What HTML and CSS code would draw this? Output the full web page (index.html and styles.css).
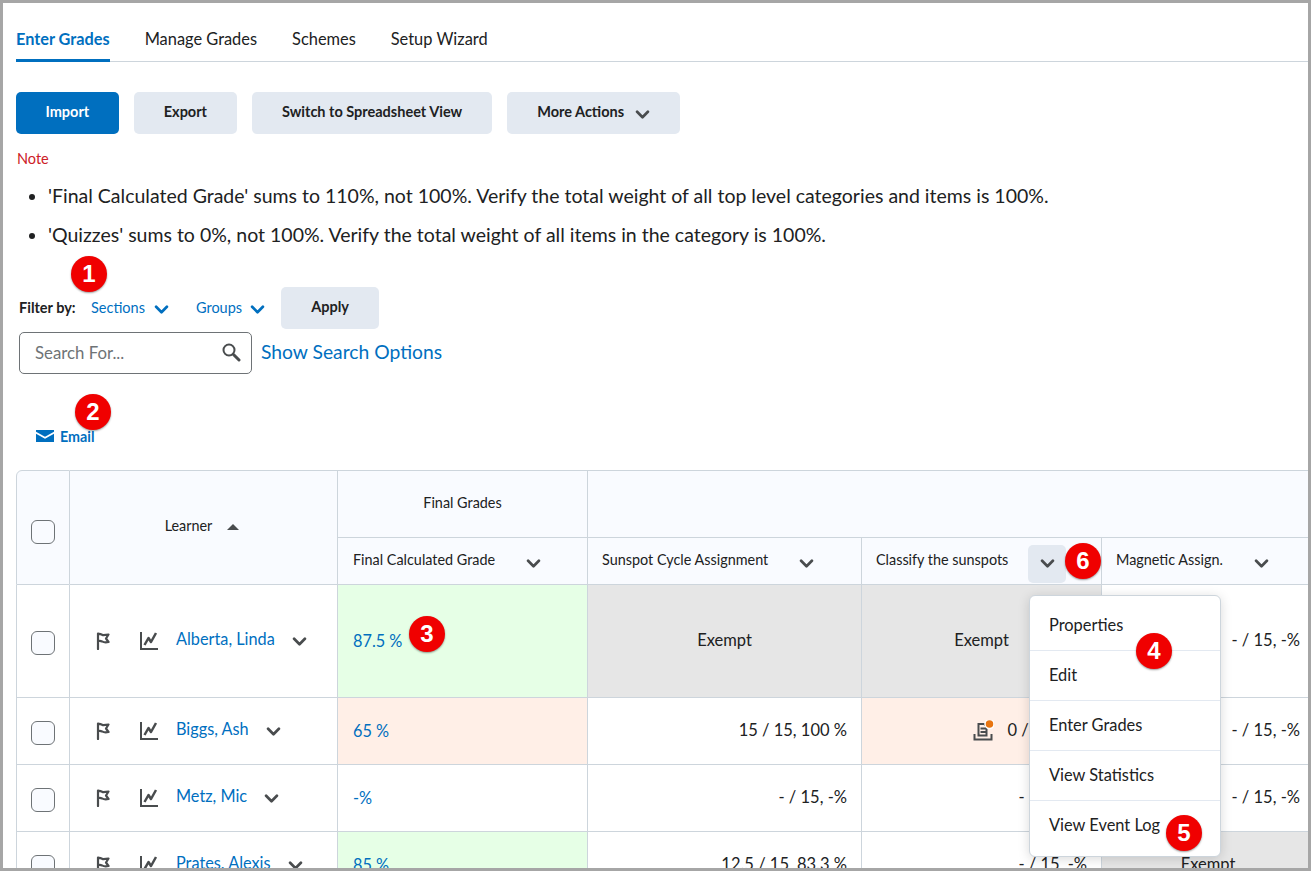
FILE: index.html
```html
<!DOCTYPE html>
<html lang="en">
<head>
<meta charset="utf-8">
<title>Enter Grades</title>
<link rel="stylesheet" href="styles.css">
</head>
<body>
<svg class="defs" aria-hidden="true">
  <symbol id="chev" viewBox="0 0 16 10"><path d="M2 2l6 6 6-6" fill="none" stroke="currentColor" stroke-width="3" stroke-linecap="round" stroke-linejoin="round"/></symbol>
  <symbol id="flag" viewBox="0 0 14 18"><path d="M2 1.500V17M2 2c3-.6 4 1 5.500 1.200L12.500 2.500 10 6.500l2.500 3.500c-3 .8-5 .3-6.500-.6-1.500-.7-2.800-.6-4-.2" fill="none" stroke="currentColor" stroke-width="2.200" stroke-linecap="round" stroke-linejoin="round"/></symbol>
  <symbol id="chart" viewBox="0 0 18 18"><path d="M1 0v17h17" fill="none" stroke="currentColor" stroke-width="2"/><path d="M4.500 13L8.500 6l2.500 4L16 1" fill="none" stroke="currentColor" stroke-width="2.500" stroke-linejoin="round"/></symbol>
</svg>
<div class="frame">
  <nav class="tabs">
    <a class="tab active">Enter Grades</a>
    <a class="tab">Manage Grades</a>
    <a class="tab">Schemes</a>
    <a class="tab">Setup Wizard</a>
  </nav>
  <div class="actions">
    <button class="btn primary">Import</button>
    <button class="btn">Export</button>
    <button class="btn">Switch to Spreadsheet View</button>
    <button class="btn more">More Actions <svg class="ic-chev"><use href="#chev"/></svg></button>
  </div>
  <div class="note-title">Note</div>
  <ul class="notes">
    <li>'Final Calculated Grade' sums to 110%, not 100%. Verify the total weight of all top level categories and items is 100%.</li>
    <li>'Quizzes' sums to 0%, not 100%. Verify the total weight of all items in the category is 100%.</li>
  </ul>
  <div class="filters">
    <span class="filter-label">Filter by:</span>
    <a class="filter sections">Sections <svg class="ic-chev"><use href="#chev"/></svg></a>
    <a class="filter groups">Groups <svg class="ic-chev"><use href="#chev"/></svg></a>
    <button class="btn apply">Apply</button>
  </div>
  <div class="search-row">
    <div class="search">
      <span>Search For...</span>
      <svg class="ic-search" viewBox="0 0 20 20"><circle cx="8" cy="8" r="5.500" fill="none" stroke="#494c4e" stroke-width="2"/><path d="M12.500 12.500L18 18" stroke="#494c4e" stroke-width="3" stroke-linecap="round"/></svg>
    </div>
    <a class="search-link">Show Search Options</a>
  </div>
  <a class="email">
    <svg class="ic-mail" viewBox="0 0 18 12"><path d="M0 0h18v1.800L9 6.800 0 1.800z" fill="#006fbf"/><path d="M0 3.800l9 5 9-5V12H0z" fill="#006fbf"/></svg>
    Email
  </a>
  <div class="table-wrap">
    <table class="grades">
      <colgroup>
        <col class="c-check"><col class="c-learner"><col class="c-final"><col class="c-a"><col class="c-b"><col class="c-c">
      </colgroup>
      <thead>
        <tr class="h1">
          <th rowspan="2" class="check-cell head-check"><span class="check"></span></th>
          <th rowspan="2" class="learner-h"><span>Learner</span><i class="sort"></i></th>
          <th class="group">Final Grades</th>
          <th colspan="3"></th>
        </tr>
        <tr class="h2">
          <th><div class="hc">Final Calculated Grade<svg class="ic-chev dark"><use href="#chev"/></svg></div></th>
          <th><div class="hc">Sunspot Cycle Assignment<svg class="ic-chev dark"><use href="#chev"/></svg></div></th>
          <th><div class="hc boxed">Classify the sunspots<span class="chev-box"><svg class="ic-chev dark"><use href="#chev"/></svg></span></div></th>
          <th><div class="hc">Magnetic Assign.<svg class="ic-chev dark"><use href="#chev"/></svg></div></th>
        </tr>
      </thead>
      <tbody>
        <tr class="r1">
          <td class="check-cell"><span class="check"></span></td>
          <td><div class="learner"><svg class="ic-flag"><use href="#flag"/></svg><svg class="ic-chart"><use href="#chart"/></svg><a>Alberta, Linda</a><svg class="ic-chev dark"><use href="#chev"/></svg></div></td>
          <td class="pct good">87.5 %</td>
          <td class="mid grey">Exempt</td>
          <td class="mid grey">Exempt</td>
          <td class="val">- / 15, -%</td>
        </tr>
        <tr class="r2">
          <td class="check-cell"><span class="check"></span></td>
          <td><div class="learner"><svg class="ic-flag"><use href="#flag"/></svg><svg class="ic-chart"><use href="#chart"/></svg><a>Biggs, Ash</a><svg class="ic-chev dark"><use href="#chev"/></svg></div></td>
          <td class="pct bad">65 %</td>
          <td class="val">15 / 15, 100 %</td>
          <td class="val bad sub">
            <svg class="ic-sub" viewBox="0 0 21 21"><path d="M1.500 14v5.500h17V14" fill="none" stroke="#494c4e" stroke-width="2"/><path d="M5.500 15.500V4h5.500l2.500 2v9.500zM7.500 8.500h5M7.500 12h5" fill="none" stroke="#494c4e" stroke-width="2"/><circle cx="16.500" cy="4" r="4.500" fill="#e87511" stroke="#fff" stroke-width="1.500"/></svg>0 / 15, 0 %
          </td>
          <td class="val">- / 15, -%</td>
        </tr>
        <tr class="r2">
          <td class="check-cell"><span class="check"></span></td>
          <td><div class="learner"><svg class="ic-flag"><use href="#flag"/></svg><svg class="ic-chart"><use href="#chart"/></svg><a>Metz, Mic</a><svg class="ic-chev dark"><use href="#chev"/></svg></div></td>
          <td class="pct">-%</td>
          <td class="val">- / 15, -%</td>
          <td class="val">- / 15, -%</td>
          <td class="val">- / 15, -%</td>
        </tr>
        <tr class="r2">
          <td class="check-cell"><span class="check"></span></td>
          <td><div class="learner"><svg class="ic-flag"><use href="#flag"/></svg><svg class="ic-chart"><use href="#chart"/></svg><a>Prates, Alexis</a><svg class="ic-chev dark"><use href="#chev"/></svg></div></td>
          <td class="pct good">85 %</td>
          <td class="val">12.5 / 15, 83.3 %</td>
          <td class="val">- / 15, -%</td>
          <td class="mid grey">Exempt</td>
        </tr>
      </tbody>
    </table>
  </div>
  <ul class="menu">
    <li>Properties</li>
    <li>Edit</li>
    <li>Enter Grades</li>
    <li>View Statistics</li>
    <li>View Event Log</li>
  </ul>
  <span class="badge b1">1</span>
  <span class="badge b2">2</span>
  <span class="badge b3">3</span>
  <span class="badge b4">4</span>
  <span class="badge b5">5</span>
  <span class="badge b6">6</span>
</div>
</body>
</html>
```
FILE: styles.css
```css
* { box-sizing: border-box; }
html, body { margin: 0; height: 871px; overflow: hidden; background: #fff; }
body { font-family: Lato, "Liberation Sans", sans-serif; color: #202122; }
.defs { display: none; }

.frame {
  position: relative;
  width: 1311px;
  height: 871px;
  border: 3px solid #a6a6a6;
  padding: 0 0 0 13px;
  overflow: hidden;
}

.tabs {
  display: flex;
  gap: 35px;
  height: 59px;
  border-bottom: 1px solid #cdd5dc;
}
.tab {
  position: relative;
  height: 58px;
  padding-top: 26px;
  font-size: 16.400px;
  line-height: 20px;
  color: #202122;
}
.tab.active { color: #006fbf; font-weight: 700; font-size: 16.300px; }
.tab.active::after {
  content: "";
  position: absolute;
  left: 0; right: 0; bottom: -1px;
  height: 3px;
  background: #006fbf;
}

.actions { display: flex; gap: 15px; margin-top: 30px; }
.btn {
  height: 42px;
  padding: 0 30px 2px;
  border: 0;
  border-radius: 5px;
  background: #e3e9f1;
  color: #202122;
  font: 700 14.500px/20px Lato, "Liberation Sans", sans-serif;
}
.btn.primary { background: #006fbf; color: #fff; padding: 0 29.500px 2px; }
.btn.more { display: flex; align-items: center; gap: 11px; }
.ic-chev { width: 15px; height: 9px; color: #494c4e; display: block; flex: none; }
.more .ic-chev { margin-top: 4px; }

.note-title { margin: 16px 0 0 1px; font-size: 14.500px; line-height: 17px; color: #cd2026; }
.notes { margin: 15px 0 0; padding: 0 0 0 32px; font-size: 19.500px; line-height: 27px; color: #202122; }
.notes li { margin-bottom: 12px; }

.filters { display: flex; align-items: center; height: 42px; margin: 39px 0 0 3px; }
.filter-label { width: 72px; padding-bottom: 2px; font-size: 14.500px; font-weight: 700; white-space: nowrap; }
.filter { display: flex; align-items: center; gap: 9px; padding-bottom: 2px; font-size: 14.500px; color: #006fbf; margin-right: 27px; }
.filter .ic-chev { color: #006fbf; margin-top: 4px; }
.filter.groups { gap: 8px; margin-right: 16px; }
.btn.apply { width: 98px; padding: 0 0 2px; }

.search-row { display: flex; align-items: center; gap: 9px; margin: 3px 0 0 3px; }
.search {
  display: flex;
  align-items: center;
  justify-content: space-between;
  width: 233px;
  height: 42px;
  padding: 0 10px 2px 15px;
  border: 1px solid #6e7376;
  border-radius: 5px;
  font-size: 16.800px;
  color: #6e7376;
}
.ic-search { width: 20px; height: 20px; }
.search-link { margin-bottom: 3px; font-size: 19.300px; color: #006fbf; }

.email {
  display: flex;
  align-items: center;
  gap: 6px;
  margin: 54px 0 0 20px;
  height: 16px;
  font-size: 14.300px;
  font-weight: 700;
  color: #006fbf;
}
.ic-mail { width: 18px; height: 12px; }

.table-wrap { margin-top: 26px; }
.grades {
  table-layout: fixed;
  width: 1299px;
  border-collapse: separate;
  border-spacing: 0;
  font-size: 15px;
}
.c-check { width: 54px; }
.c-learner { width: 268px; }
.c-final { width: 250px; }
.c-a { width: 274px; }
.c-b { width: 240px; }
.c-c { width: 213px; }

.grades th, .grades td {
  padding: 0;
  border-right: 1px solid #cdd5dc;
  border-bottom: 1px solid #cdd5dc;
  font-weight: 400;
}
.grades tr > :first-child { border-left: 1px solid #cdd5dc; }
.grades .h2 > :first-child { border-left: 0; }
.grades .h2 > :first-child .hc { padding-left: 15px; }
.grades thead th { background: #f9fbff; font-size: 14.400px; }
.grades .h1 th { border-top: 1px solid #cdd5dc; }
.grades .h1 { height: 68px; }
.grades .h2 { height: 47px; }
.grades .r1 { height: 113px; }
.grades .r2 { height: 67px; }
.grades thead .h1 th:first-child { border-top-left-radius: 6px; }
.grades .group { padding-bottom: 4px; }
.grades .check-cell { text-align: center; padding-top: 4px; }
.grades .head-check { padding-top: 9px; }
.check {
  display: inline-block;
  width: 24px;
  height: 24px;
  border: 1px solid #6e7376;
  border-radius: 6px;
  background: #f9fbff;
  vertical-align: middle;
}
.grades .learner-h { padding: 0 3px 5px 0; }
.learner-h span { margin-right: 15px; }
.sort {
  display: inline-block;
  width: 0; height: 0;
  border-left: 6px solid transparent;
  border-right: 6px solid transparent;
  border-bottom: 6px solid #494c4e;
  vertical-align: 1px;
}
.hc {
  display: flex;
  align-items: center;
  gap: 31px;
  padding: 0 0 3px 14px;
  text-align: left;
  white-space: nowrap;
}
.hc .ic-chev { margin-top: 7px; }
.hc.boxed { gap: 20px; }
.chev-box {
  display: flex;
  align-items: center;
  justify-content: center;
  width: 38px;
  height: 38px;
  margin: 4px 0 -4px;
  border-radius: 5px;
  background: #e3e9f1;
}
.hc .chev-box .ic-chev { margin: 0; }

.learner { display: flex; align-items: center; padding-left: 26px; font-size: 16.300px; }
.learner a { color: #006fbf; margin-left: 18px; margin-top: -6px; }
.learner .ic-chev { margin-left: 17px; }
.ic-flag { width: 14px; height: 18px; color: #494c4e; }
.ic-chart { width: 18px; height: 18px; margin-left: 30px; color: #494c4e; }

.grades .pct { padding: 0 0 2px 15px; font-size: 16.300px; color: #006fbf; }
.good { background: #e6ffe6; }
.bad { background: #ffefe7; }
.grey { background: #e6e6e6; }
.grades .val { text-align: right; padding: 0 14px 2px 0; font-size: 16.500px; }
.grades .mid { text-align: center; padding-bottom: 2px; font-size: 16.500px; }
.ic-sub { width: 21px; height: 21px; vertical-align: -5px; margin-right: 13px; }

.menu {
  position: absolute;
  left: 1026px;
  top: 592px;
  width: 192px;
  height: 262px;
  margin: 0;
  padding: 5px 0 0;
  list-style: none;
  background: #fff;
  border: 1px solid #cdd5dc;
  border-radius: 6px;
  box-shadow: 0 2px 12px rgba(0,0,0,.15);
  font-size: 16.400px;
}
.menu li {
  height: 50px;
  padding: 12px 0 0 19px;
  line-height: 24px;
  border-bottom: 1px solid #e3e9f1;
  color: #202122;
}
.menu li:last-child { border-bottom: 0; }

.badge {
  position: absolute;
  width: 36px;
  height: 36px;
  border-radius: 50%;
  background: #f00000;
  color: #fff;
  font: 700 24px/36px "Liberation Sans", Arial, sans-serif;
  text-align: center;
  box-shadow: 0 1px 2px rgba(0,0,0,.4);
}
.b1 { left: 68px; top: 253px; }
.b2 { left: 72px; top: 391px; }
.b3 { left: 406px; top: 613px; }
.b4 { left: 1133px; top: 630px; }
.b5 { left: 1163px; top: 812px; }
.b6 { left: 1062px; top: 540px; }
```
